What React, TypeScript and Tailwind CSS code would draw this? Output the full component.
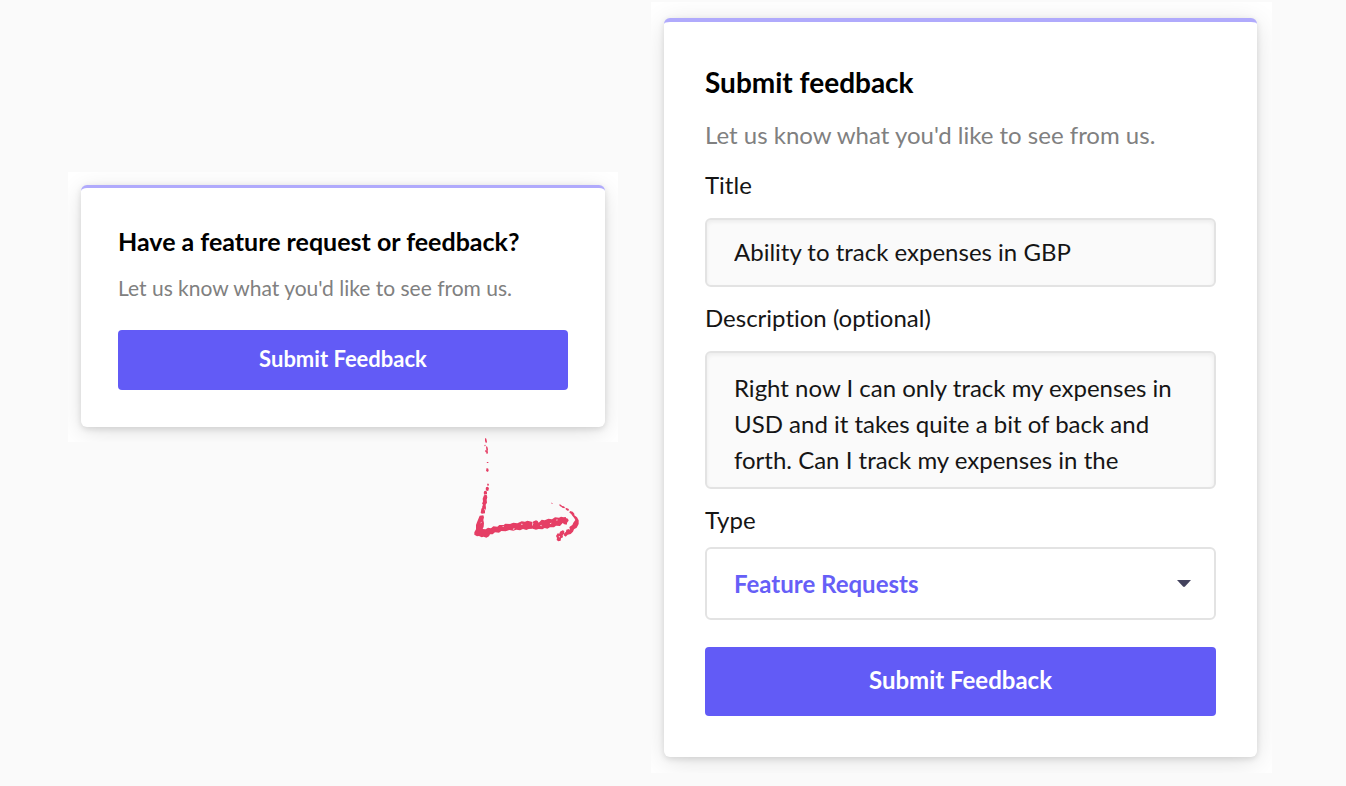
import { useState } from "react";

const fieldClass =
  "block w-full rounded-md border-2 border-[#e3e3e3] px-[27px] text-2xl leading-9 text-[#151515] outline-none";

function Card({ small, children }: { small?: boolean; children: React.ReactNode }) {
  return (
    <div className={small ? "overflow-hidden bg-white p-[13px] pb-[15px]" : "overflow-hidden bg-white py-4 pr-[15px] pl-[13px]"}>
      <div
        className={
          small
            ? "rounded-md border-t-[3px] border-[#b0aafc] bg-white px-[37px] pt-[37px] pb-[37px] shadow-[0_2px_6px_rgba(0,0,0,0.12),0_5px_24px_rgba(0,0,0,0.12)]"
            : "rounded-md border-t-4 border-[#b0aafc] bg-white px-[41px] pt-[42px] pb-[41px] shadow-[0_2px_6px_rgba(0,0,0,0.12),0_5px_28px_rgba(0,0,0,0.12)]"
        }
      >
        {children}
      </div>
    </div>
  );
}

// hand-drawn chalk arrow pointing from the prompt to the form
function SketchArrow() {
  return (
    <svg width="140" height="120" viewBox="0 0 420 360" fill="#e53e65" aria-hidden="true">
      <path d="M75 24l4 2 2 10-3 4-3-7zM73 45l3-1 1 4-3 1zM78 49l4 1 2 8-1 4 1 8-4 2-2-7 1-6zM76 60l2 1-1 6-2-1zM80 96l5 0 0 3-4 0zM80 114l5 2 1 7-4 3-4-4zM81 161l5 0 1 5-4 2zM78 172l5-2 4 4-2 8-5 1-3-5zM73 183l5-1 3 4 0 6-8 2-2-5z" />
      <path d="M72 196l8-2 2 8-2 7 1 9-4 6 1 11-3 7 0 8-9 1-4-2 2-12 3-5-1-10 3-8-1-8zM59 257l11-1 2 6-2 8 2 9-1 11-3 7 9 1 7-5 9 2 7-6 12 1 6-5 13 0 5-4 14 1 10-4 12 2 13-6 10 1 7-3 13 3 5 4-3 6 3 5-2 6-12 1-7 3-10-3-9 4-11-2-9 3-12-2-11 4-13-1-7 5-12-1-7 6-8 0-3 6-8 4-8-3-6 2-8-4-6 1-8-5 0-7 5-9 0-13 3-8z" />
      <path d="M218 275l10-4 5 2 3 5 9-9 9 2 11-5 11 2 9-6 12 1 6-3 7 2 7-1 2 4 5 1 2 6-4 5-2 7-7-1-5-4-8 9-12-1-6 5-12 0-8 4-8-2-7 4-11-1-8 2-10-3z" />
      <path d="M298 223l5 1 3 4 5 1 4 3-2 3-6-2-3-3-5-2zM273 218l5 1 0 2-5-1zM317 233l8 3 3 5-6 1-5-4zM330 243l8 2 5 6 0 5 8 6 5 9 0 11-6 11-8 5-3 7-7 7-9 2-6 6-6-4 2-7 5-4 1-6 8-2 2-7 8-5 3-7 6-8-4-7-5-6-4-6-5-3zM308 301l5 2-1 8-4 5 1 6-6 3-1 7-7 2-5-4 1-6-3-6 5-8 5 1 2-6zM314 314l4 1-1 4-4-1z" />
      <g fill="#fafafa">
        <path d="M67 221l2 2-1 6-2-3zM72 236l2 1-2 6zM63 275l2 2-3 4zM127 289l6-1-4 3zM158 297l5-2 1 2-4 2zM183 281l6 1-4 3zM218 276l2 4-2 7-1-5zM240 287l5-3-1 5zM269 280l6-2-3 4zM290 268l4 2-5 2zM326 297l4-3 0 5zM296 319l4-1-2 5z" />
      </g>
    </svg>
  );
}

export default function App() {
  const [title, setTitle] = useState("Ability to track expenses in GBP");
  const [description, setDescription] = useState(
    "Right now I can only track my expenses in USD and it takes quite a bit of back and forth. Can I track my expenses in the"
  );
  const [type, setType] = useState("Feature Requests");

  return (
    <main className="grid min-h-screen grid-cols-[550fr_621fr] items-start gap-[33px] bg-[#fafafa] pt-[2px] pr-[74px] pb-3 pl-[68px] font-['Lato',sans-serif] [font-variant-ligatures:none]">
      <section className="pt-[170px]">
        <Card small>
          <h2 className="text-[25px] leading-8 font-bold text-black">Have a feature request or feedback?</h2>
          <p className="mt-[15px] text-[21px] leading-8 text-[#808080]">Let us know what you'd like to see from us.</p>
          <button type="button" className="mt-[26px] h-[60px] w-full rounded bg-[#625bf6] pb-[3px] text-[22px] font-bold text-white">
            Submit Feedback
          </button>
        </Card>
        <div className="-mt-3 flex justify-end pr-[18px]">
          <SketchArrow />
        </div>
      </section>

      <Card>
        <form onSubmit={(e) => e.preventDefault()}>
          <h2 className="text-[28px] leading-9 font-bold text-black">Submit feedback</h2>
          <p className="mt-[17px] text-2xl leading-9 text-[#808080]">Let us know what you'd like to see from us.</p>

          <label htmlFor="title" className="mt-[14px] block text-2xl leading-9 text-[#151515]">Title</label>
          <input
            id="title"
            value={title}
            onChange={(e) => setTitle(e.target.value)}
            className={`${fieldClass} mt-[15px] h-[69px] bg-[#fafafa] pb-[3px] shadow-[inset_0_2px_4px_rgba(0,0,0,0.06)]`}
          />

          <label htmlFor="description" className="mt-[13px] block text-2xl leading-9 text-[#151515]">Description (optional)</label>
          <textarea
            id="description"
            value={description}
            onChange={(e) => setDescription(e.target.value)}
            className={`${fieldClass} mt-[15px] h-[138px] resize-none overflow-hidden bg-[#fafafa] pt-[17px] shadow-[inset_0_2px_4px_rgba(0,0,0,0.06)]`}
          />

          <label htmlFor="type" className="mt-[13px] block text-2xl leading-9 text-[#151515]">Type</label>
          <div className="relative mt-[9px]">
            <select
              id="type"
              value={type}
              onChange={(e) => setType(e.target.value)}
              className="block h-[73px] w-full appearance-none rounded-md border-2 border-[#e3e3e3] bg-white px-[27px] text-2xl font-bold text-[#665ff7] outline-none"
            >
              <option>Feature Requests</option>
            </select>
            <svg className="pointer-events-none absolute top-[33px] right-[25px]" width="14" height="8" viewBox="0 0 14 8" fill="#43425d" aria-hidden="true">
              <path d="M0 0h14L8 6.500Q7 7.300 6 6.500Z" />
            </svg>
          </div>

          <button type="submit" className="mt-[27px] h-[69px] w-full rounded bg-[#625bf6] pb-[3px] text-2xl font-bold text-white">
            Submit Feedback
          </button>
        </form>
      </Card>
    </main>
  );
}
